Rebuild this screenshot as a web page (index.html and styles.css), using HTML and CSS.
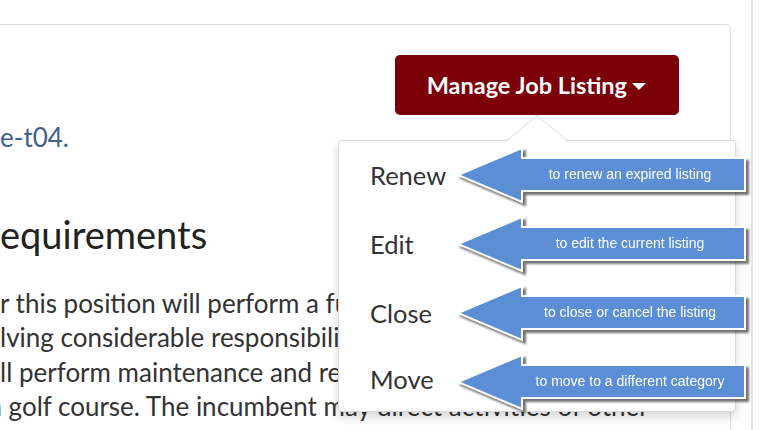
FILE: index.html
```html
<!DOCTYPE html>
<html>
<head>
	<meta charset="UTF-8">
	<title>Manage Job Listing</title>
	<link rel="stylesheet" href="styles.css">
</head>
<body>
<div class="page">
	<div class="main">
		<div class="card">
			<div class="card-head">
				<div class="dropdown">
					<div class="btn-manage">Manage Job Listing<span class="caret"></span></div>
					<ul class="menu">
						<li>Renew
							<svg class="note" width="298" height="62" viewBox="0 0 298 62">
								<polygon points="2,28 66,1 66,11 289,11 289,44 66,44 66,55"/>
								<text x="174" y="32">to renew an expired listing</text>
							</svg>
						</li>
						<li>Edit
							<svg class="note" width="298" height="62" viewBox="0 0 298 62">
								<polygon points="2,28 66,1 66,11 289,11 289,44 66,44 66,55"/>
								<text x="174" y="32">to edit the current listing</text>
							</svg>
						</li>
						<li>Close
							<svg class="note" width="298" height="62" viewBox="0 0 298 62">
								<polygon points="2,28 66,1 66,11 289,11 289,44 66,44 66,55"/>
								<text x="174" y="32">to close or cancel the listing</text>
							</svg>
						</li>
						<li>Move
							<svg class="note" width="298" height="62" viewBox="0 0 298 62">
								<polygon points="2,28 66,1 66,11 289,11 289,44 66,44 66,55"/>
								<text x="174" y="32">to move to a different category</text>
							</svg>
						</li>
					</ul>
				</div>
			</div>
			<p class="link-line"><a href="#">e-t04.</a></p>
			<h2 class="title">equirements</h2>
			<div class="desc">
				<div>r this position will perform a full range of skilled</div>
				<div>lving considerable responsibility and independent</div>
				<div>ll perform maintenance and repair work on the</div>
				<div class="cut">a golf course. The incumbent may direct activities of other</div>
			</div>
		</div>
	</div>
</div>
</body>
</html>
```

FILE: styles.css
```css
*{
	box-sizing: border-box;
}
body{
	margin: 0;
	background: #fff;
	font-family: Lato, "Open Sans", sans-serif;
	color: #333;
}
.page{
	display: flex;
	width: 765px;
	height: 430px;
	overflow: hidden;
}
.main{
	flex: 0 0 753px;
	padding-top: 24px;
	border-right: 2px solid #e3e3e3;
}
.card{
	width: 731px;
	height: 420px;
	padding: 30px 51px 0 0;
	border: 1px solid #ddd;
	border-left: 0;
	border-bottom: 0;
	border-top-right-radius: 5px;
}
.card-head{
	display: flex;
	justify-content: flex-end;
}
.dropdown{
	position: relative;
	z-index: 5;
}
.btn-manage{
	display: flex;
	align-items: center;
	height: 60px;
	padding: 0 33px 0 32px;
	background: #7b0008;
	border-radius: 5px;
	color: #fff;
	font-size: 23.5px;
	font-weight: bold;
}
.caret{
	width: 0;
	height: 0;
	margin: 2px 0 0 5px;
	border-top: 7px solid #fff;
	border-left: 7px solid transparent;
	border-right: 7px solid transparent;
}
.menu{
	position: absolute;
	top: calc(100% + 25px);
	right: -57px;
	width: 398px;
	margin: 0;
	padding: 0;
	list-style: none;
	background: #fff;
	border: 1px solid rgba(0,0,0,0.15);
	border-radius: 4px;
	box-shadow: 0 5px 10px rgba(0,0,0,0.16);
}
.menu:before,.menu:after{
	content: "";
	position: absolute;
	width: 0;
	height: 0;
	border-style: solid;
	border-color: transparent;
}
.menu:before{
	top: -26px;
	left: 167px;
	border-width: 0 31px 26px;
	border-bottom-color: rgba(0,0,0,0.15);
}
.menu:after{
	top: -25px;
	left: 168px;
	border-width: 0 30px 25px;
	border-bottom-color: #fff;
}
.menu li{
	position: relative;
	display: flex;
	align-items: center;
	height: 69px;
	padding: 0 0 2px 31px;
	font-size: 25.5px;
	color: #333;
}
.menu li:last-child{
	height: 63px;
}
.note{
	position: absolute;
	top: 6px;
	left: 117px;
	overflow: visible;
	filter: drop-shadow(3px 3px 1px rgba(0,0,0,0.55));
}
.note polygon{
	fill: #5b8ed5;
	stroke: #fff;
	stroke-width: 2;
	stroke-linejoin: miter;
}
.note text{
	fill: #fff;
	font-family: "Liberation Sans", Arial, sans-serif;
	font-size: 14px;
	text-anchor: middle;
}
.link-line{
	margin: 5px 0 0;
	font-size: 26px;
	line-height: 34.5px;
	white-space: nowrap;
}
.link-line a{
	color: #40608d;
	text-decoration: none;
}
.title{
	margin: 58px 0 0;
	font-size: 38px;
	font-weight: normal;
	line-height: 42px;
	color: #222;
	white-space: nowrap;
}
.desc{
	margin-top: 31px;
	font-size: 26px;
	line-height: 34.5px;
	color: #333;
	white-space: nowrap;
}
.desc .cut{
	margin-left: -11px;
}
```
